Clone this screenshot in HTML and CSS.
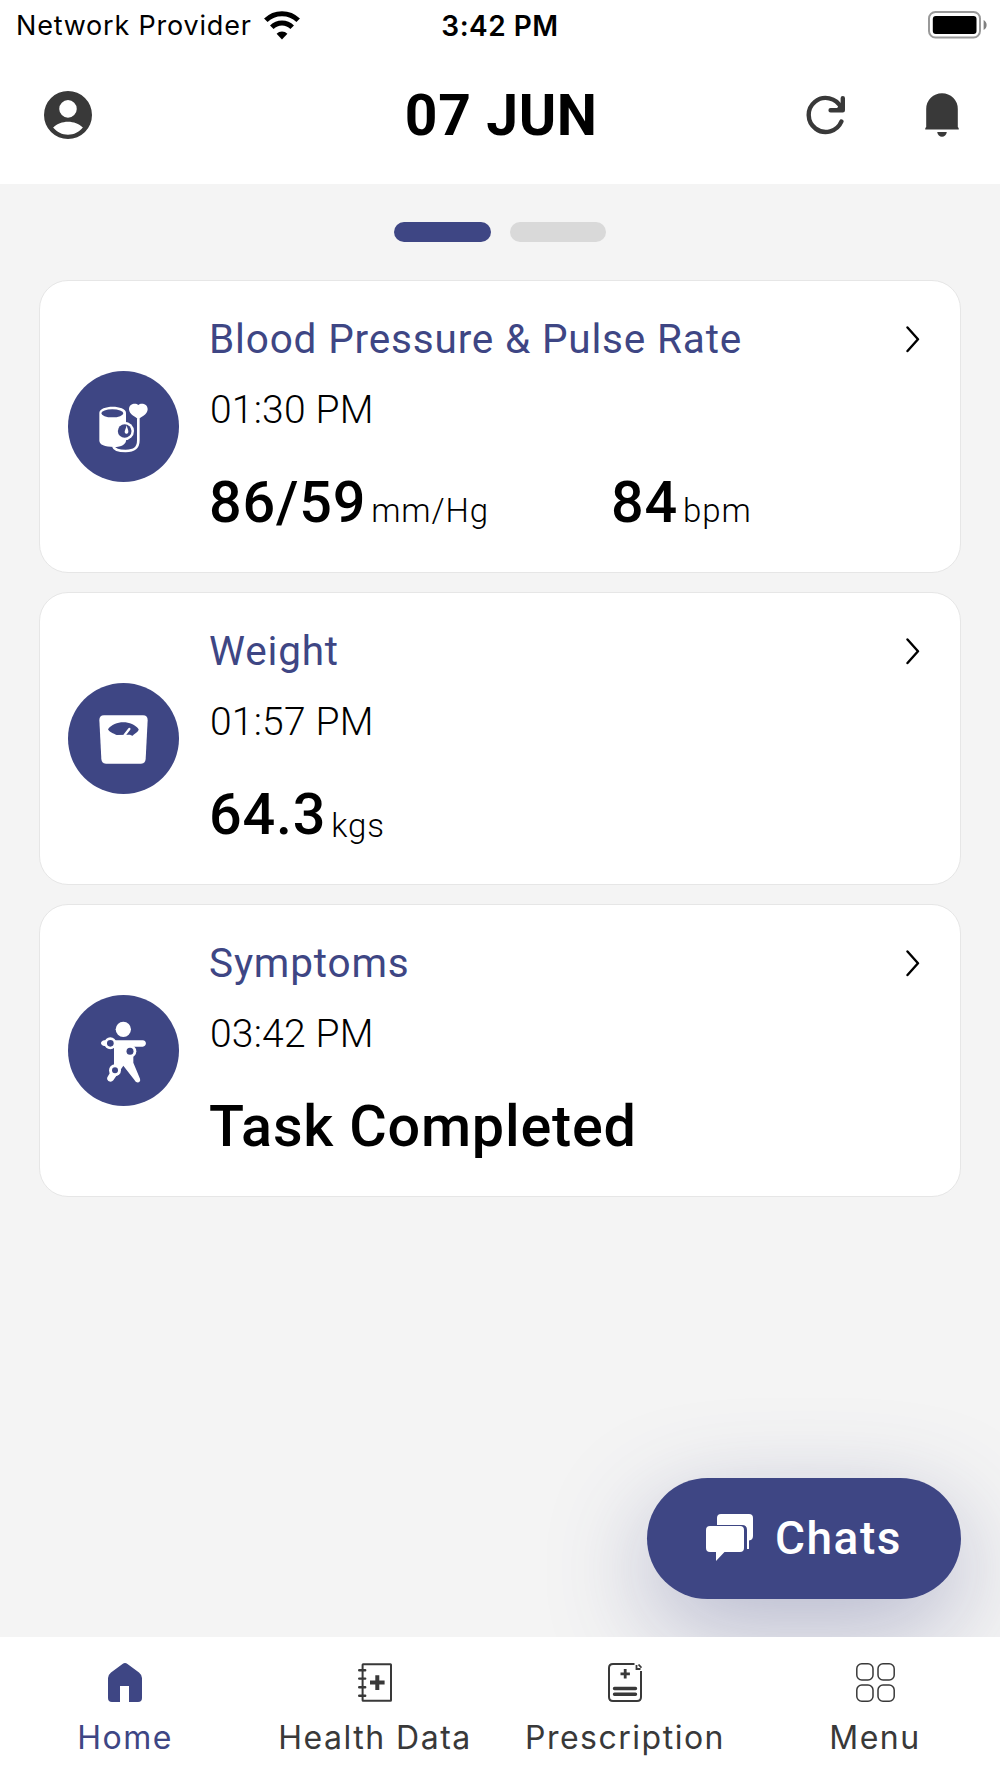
FILE: index.html
```html
<!doctype html>
<html lang="en">
<head>
  <meta charset="utf-8">
  <title>Home</title>
  <link rel="stylesheet" href="styles.css">
</head>
<body>
  <div class="statusbar">
    <div class="carrier">
      <span>Network Provider</span>
      <svg class="wifi" viewBox="0 0 36 29" width="36" height="29">
        <path d="M1.800 9.300a23 23 0 0 1 32.400 0" fill="none" stroke="#000" stroke-width="5"/>
        <path d="M7.800 16.300a14.400 14.400 0 0 1 20.400 0" fill="none" stroke="#000" stroke-width="5"/>
        <path d="M12.600 22.800a7.600 7.600 0 0 1 10.800 0L18 28.500z"/>
      </svg>
    </div>
    <span class="clock">3:42 PM</span>
    <svg class="battery" viewBox="0 0 60 28" width="60" height="28">
      <rect x="1" y="1" width="51" height="25.500" rx="6.500" fill="none" stroke="#999" stroke-width="2"/>
      <rect x="4.800" y="5" width="43.700" height="18" rx="3" fill="#000"/>
      <path d="M55.600 9c4 2 4 8 0 10z" fill="#808080"/>
    </svg>
  </div>

  <header class="header">
    <svg class="profile" viewBox="2 2 20 20" width="48" height="48">
      <path fill="#393939" d="M12 2a10 10 0 1 0 0 20 10 10 0 0 0 0-20zm0 3.800a3.650 3.650 0 1 1 0 7.300 3.650 3.650 0 0 1 0-7.300zm0 14.400c-2.400 0-4.700-1.100-6.200-3 1.600-1.500 3.900-2.400 6.200-2.400s4.600.9 6.200 2.400c-1.500 1.900-3.800 3-6.200 3z"/>
    </svg>
    <h1>07 JUN</h1>
    <div class="actions">
      <svg viewBox="0 0 40 40" width="40" height="40" fill="none" stroke="#393939" stroke-width="4.400" stroke-linecap="round" stroke-linejoin="round">
        <path d="M35.400 26.500A17 17 0 1 1 35 12.500"/>
        <path d="M36.800 3.200v12.100H24.600"/>
        <path fill="#393939" stroke="none" d="M30 14l6-6v6z"/>
      </svg>
      <svg viewBox="0 0 34 44" width="34" height="44" fill="#393939">
        <path d="M1.200 34V16a15.800 15.800 0 0 1 31.600 0v18q1.200.5 1 2.600H.2Q0 34.500 1.200 34z"/>
        <path d="M12.200 39h9.600c-.6 6.300-9 6.300-9.600 0z"/>
      </svg>
    </div>
  </header>

  <main class="content">
    <div class="pager">
      <span class="dot active"></span>
      <span class="dot"></span>
    </div>

    <section class="card">
      <svg class="card-icon" viewBox="0 0 333 333">
        <circle cx="166.500" cy="166.500" r="166.500" fill="#3e4684"/>
        <path fill="#fff" d="M94 126c0-25 80-25 80 0v84c-2 10-12 18-36 18-28 0-44-6-44-20z"/>
        <ellipse cx="133" cy="127" rx="33" ry="12" fill="#3e4684"/>
        <circle cx="170" cy="180" r="28" fill="#fff"/>
        <circle cx="170" cy="180" r="20.500" fill="#3e4684"/>
        <path fill="#fff" d="M176 163c2 10 6 15 5 20-1 7-10 7-11 0 0-5 4-10 6-20z"/>
        <path fill="#fff" d="M211 146c-6-8-28-15-28-31 0-17 20-20 28-13 8-7 28-4 28 13 0 16-21 23-28 31z"/>
        <path fill="none" stroke="#fff" stroke-width="8" d="M211 142v66c0 23-12 32-38 32-22 0-34-3-37-14"/>
      </svg>
      <div class="card-body">
        <h2>Blood Pressure &amp; Pulse Rate</h2>
        <p class="time">01:30 PM</p>
        <div class="values">
          <div class="reading wide"><b>86/59</b><span>mm/Hg</span></div>
          <div class="reading"><b>84</b><span>bpm</span></div>
        </div>
      </div>
      <svg class="chevron" viewBox="0 0 14 27"><path d="M1.500 1.500 12 13.200 1.500 25"/></svg>
    </section>

    <section class="card">
      <svg class="card-icon" viewBox="0 0 333 333">
        <circle cx="166.500" cy="166.500" r="166.500" fill="#3e4684"/>
        <path fill="#fff" d="M108 97h117q14 0 14 14l-6 117q-1 14-14 14H114q-13 0-14-14l-6-117q0-14 14-14z"/>
        <path fill="#3e4684" d="M120 139c20-28 72-28 92 0 0 7-11 13-18 19-4-1-6-3-11-3l-37 1c-9-4-24-10-26-17z"/>
        <path stroke="#fff" stroke-width="7" stroke-linecap="round" d="m170 156 14-18"/>
      </svg>
      <div class="card-body">
        <h2>Weight</h2>
        <p class="time">01:57 PM</p>
        <div class="values">
          <div class="reading low"><b>64.3</b><span>kgs</span></div>
        </div>
      </div>
      <svg class="chevron" viewBox="0 0 14 27"><path d="M1.500 1.500 12 13.200 1.500 25"/></svg>
    </section>

    <section class="card">
      <svg class="card-icon" viewBox="0 0 333 333">
        <circle cx="166.500" cy="166.500" r="166.500" fill="#3e4684"/>
        <g fill="#fff">
          <circle cx="166" cy="103" r="23"/>
          <path d="M108 136h116c13 0 13 19 0 19h-28v48l20 48c4 13-12 15-16 5l-34-44-30 44c-7 9-22 2-18-9l20-34v-60h-30c-12-3-12-14 0-17z"/>
          <circle cx="127" cy="145" r="18"/>
          <circle cx="186" cy="169" r="19"/>
          <circle cx="141" cy="226" r="18"/>
        </g>
        <g fill="#3e4684">
          <circle cx="127" cy="145" r="10"/>
          <circle cx="186" cy="169" r="10.500"/>
          <circle cx="141" cy="226" r="9"/>
        </g>
      </svg>
      <div class="card-body">
        <h2>Symptoms</h2>
        <p class="time">03:42 PM</p>
        <div class="values">
          <div class="reading"><b>Task Completed</b></div>
        </div>
      </div>
      <svg class="chevron" viewBox="0 0 14 27"><path d="M1.500 1.500 12 13.200 1.500 25"/></svg>
    </section>

    <button type="button" class="chats">
      <svg viewBox="0 0 47 47" width="47" height="47" fill="#fff">
        <path d="M15 0h28q4 0 4 4v18q0 4-4 4.500V35h-2V16q0-5-5-5H11V4q0-4 4-4z"/>
        <path d="M4 12h30q4 0 4 4v18q0 4-4 4H18.500L10 47v-9H4q-4 0-4-4V16q0-4 4-4z"/>
      </svg>
      <span>Chats</span>
    </button>
  </main>

  <nav class="tabs">
    <a class="tab active">
      <svg viewBox="0 0 34 39" width="34" height="39">
        <path fill="#3e4684" d="M14.500 1q2.500-2 5 0L31 9.500q3 2.500 3 5.500v20q0 4-4 4h-9V23h-9v16H4q-4 0-4-4V15q0-3 3-5.500z"/>
      </svg>
      <span>Home</span>
    </a>
    <a class="tab">
      <svg viewBox="0 0 34 39" width="34" height="39" fill="none" stroke="#393939" stroke-width="2">
        <rect x="4.600" y="1.200" width="28.400" height="36.600" rx=".5"/>
        <path stroke-linecap="round" stroke-width="2.400" d="M1.200 7.200h6M1.200 15.600h6M1.200 24.200h6M1.200 32.700h6"/>
        <path stroke-width="4" d="M12 19.600h14.600M19.300 12.300v14.600"/>
      </svg>
      <span>Health Data</span>
    </a>
    <a class="tab">
      <svg viewBox="0 0 34 39" width="34" height="39" fill="none" stroke="#393939" stroke-width="2">
        <path d="M26.500 1H5Q1 1 1 5v29q0 4 4 4h24q4 0 4-4V8"/>
        <path stroke-width="2.800" d="M12.500 10.800h9.400M17.200 6.100v9.400"/>
        <path stroke-width="3.400" stroke-linecap="round" d="M6.500 25.500h21M6.500 31.300h21"/>
        <path stroke-width="1.800" d="M28.500 2v4h4M30.500 1.500l3 3.200"/>
      </svg>
      <span>Prescription</span>
    </a>
    <a class="tab">
      <svg viewBox="0 0 39 39" width="39" height="39" fill="none" stroke="#393939" stroke-width="1.500">
        <rect x=".8" y=".8" width="16.200" height="16.200" rx="5"/>
        <rect x="22" y=".8" width="16.200" height="16.200" rx="5"/>
        <rect x=".8" y="22" width="16.200" height="16.200" rx="5"/>
        <rect x="22" y="22" width="16.200" height="16.200" rx="5"/>
      </svg>
      <span>Menu</span>
    </a>
  </nav>
</body>
</html>
```
FILE: styles.css
```css
* {
  box-sizing: border-box;
}
body {
  margin: 0;
  height: 1778px;
  display: flex;
  flex-direction: column;
  overflow: hidden;
  font-family: Roboto, sans-serif;
  background: #fff;
  color: #000;
}
h1, h2, p {
  margin: 0;
}
svg {
  display: block;
  flex: none;
}

/* status bar */
.statusbar {
  display: grid;
  grid-template-columns: 1fr auto 1fr;
  align-items: center;
  height: 50px;
  padding: 0 16px;
  font: 27px/50px Inter, sans-serif;
}
.carrier {
  display: flex;
  align-items: center;
  gap: 12px;
  padding-top: 1px;
  letter-spacing: 0.8px;
}
.wifi {
  margin-top: -2px;
}
.clock {
  padding-top: 1px;
  font-size: 28px;
  font-weight: 600;
  letter-spacing: 0.5px;
}
.battery {
  justify-self: end;
  margin-right: -4px;
  margin-top: -2px;
}

/* header */
.header {
  display: grid;
  grid-template-columns: 1fr auto 1fr;
  align-items: center;
  height: 134px;
  padding: 0 41px 4px 43.500px;
}
.header h1 {
  padding-top: 2px;
  font-size: 57px;
  line-height: 66px;
  font-weight: 700;
  letter-spacing: 0.6px;
}
.actions {
  display: flex;
  justify-content: flex-end;
  align-items: center;
  gap: 79px;
}

/* cards */
.content {
  flex: 1;
  position: relative;
  padding: 38px 39px 0;
  background: #f4f4f4;
  overflow: hidden;
}
.pager {
  display: flex;
  justify-content: center;
  gap: 19px;
  margin-bottom: 38px;
}
.dot {
  width: 96.5px;
  height: 20px;
  border-radius: 10px;
  background: #d9d9d9;
}
.dot.active {
  background: #3e4684;
}
.card {
  display: flex;
  height: 293px;
  margin-bottom: 19.2px;
  padding: 34px 40px 0 28px;
  border: 1px solid #e6e6e6;
  border-radius: 29px;
  background: #fff;
}
.card-icon {
  width: 111px;
  height: 111px;
  margin: 56px 30px 0 0;
}
.card-body {
  flex: 1;
}
.card h2 {
  font-size: 40.5px;
  line-height: 48px;
  font-weight: 400;
  letter-spacing: 0.83px;
  color: #3e4684;
}
.time {
  margin: 24px 0 0 1px;
  font-size: 39px;
  line-height: 46px;
  font-weight: 300;
  letter-spacing: 0.2px;
}
.values {
  display: flex;
  margin-top: 36px;
}
.reading {
  display: flex;
  align-items: baseline;
  gap: 5px;
  line-height: 68px;
}
.reading.wide {
  width: 402px;
}
.reading b {
  font-size: 57.5px;
  font-weight: 500;
  letter-spacing: 0.8px;
}
.reading span {
  font-size: 33px;
  font-weight: 300;
  letter-spacing: 0.9px;
}
.reading.low span {
  transform: translateY(3px);
}
.chevron {
  width: 14px;
  height: 27px;
  margin-top: 11px;
  fill: none;
  stroke: #000;
  stroke-width: 2.4;
  stroke-linecap: round;
  stroke-linejoin: round;
}

/* floating button */
.chats {
  position: absolute;
  right: 39px;
  bottom: 38px;
  display: flex;
  align-items: center;
  gap: 22px;
  width: 314px;
  height: 121px;
  padding: 0 0 2px 59px;
  border: 0;
  border-radius: 61px;
  background: #3e4684;
  box-shadow: 0 30px 100px rgba(62, 70, 132, 0.35);
  color: #fff;
  font: 500 46px/54px Roboto, sans-serif;
  letter-spacing: 1.5px;
}

/* bottom tabs */
.tabs {
  display: grid;
  grid-template-columns: repeat(4, 1fr);
  height: 141px;
  padding-top: 26px;
  background: #fff;
}
.tab {
  display: flex;
  flex-direction: column;
  align-items: center;
  gap: 16px;
  font: 32px/40px Inter, sans-serif;
  letter-spacing: 1.5px;
  color: #393939;
}
.tab.active {
  color: #3e4684;
}
```
